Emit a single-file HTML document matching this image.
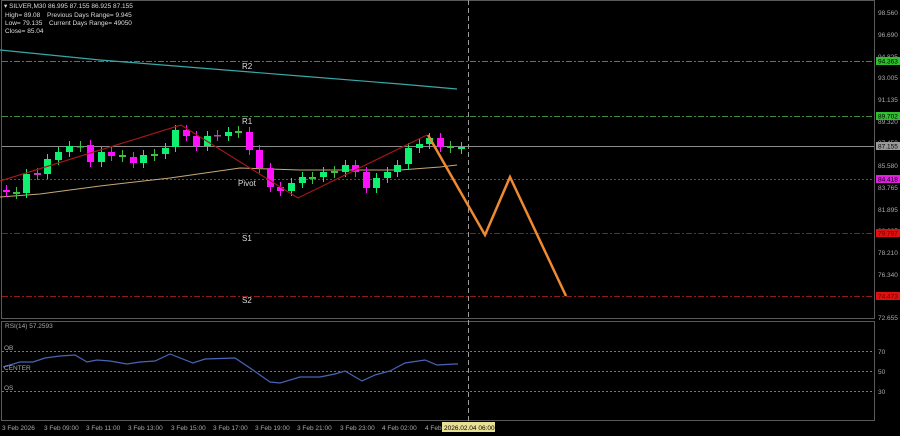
<!DOCTYPE html>
<html><head><meta charset="utf-8"><style>
html,body{margin:0;padding:0;background:#000;width:900px;height:436px;overflow:hidden}
svg{display:block;font-family:"Liberation Sans",sans-serif}
</style></head><body>
<svg id="s" width="900" height="436" viewBox="0 0 900 436" xmlns="http://www.w3.org/2000/svg">
<rect width="900" height="436" fill="#000"/>
<!-- frames -->
<rect x="1.5" y="0.5" width="873" height="318" fill="none" stroke="#5a5a5a"/>
<rect x="1.5" y="321.5" width="873" height="99" fill="none" stroke="#5a5a5a"/>
<!-- level lines -->
<g stroke-width="1" fill="none">
<line x1="2" y1="61.5" x2="874" y2="61.5" stroke="#3f8a3f" stroke-dasharray="6,2,2,2"/>
<line x1="2" y1="116.5" x2="874" y2="116.5" stroke="#3f8a3f" stroke-dasharray="6,2,2,2"/>
<line x1="2" y1="146.5" x2="874" y2="146.5" stroke="#8c8c8c"/>
<line x1="2" y1="179.5" x2="874" y2="179.5" stroke="#8a2a8a" stroke-dasharray="2,2"/>
<line x1="2" y1="233.5" x2="874" y2="233.5" stroke="#8a1c1c" stroke-dasharray="6,2,2,2"/>
<line x1="2" y1="296.5" x2="874" y2="296.5" stroke="#8a1c1c" stroke-dasharray="6,2,2,2"/>
<line x1="468.5" y1="0" x2="468.5" y2="421" stroke="#9a9a9a" stroke-dasharray="5,3"/>
</g>
<!-- MAs -->
<polyline points="0,50 100,60 200,68 300,76 400,84 457,89" fill="none" stroke="#3aa7a7" stroke-width="1.2"/>
<polyline points="0,197 40,194 100,186 170,178 240,168 300,170 400,170 440,167 457,165" fill="none" stroke="#c8a878" stroke-width="1"/>
<g id="c"></g>
<!-- zigzag -->
<polyline points="0,181 181,125 298,198 427,135" fill="none" stroke="#a01818" stroke-width="1.2"/>
<polyline points="428,135 485,235 510,177 566,296" fill="none" stroke="#f08a30" stroke-width="2.5"/>
<!-- labels -->
<g fill="#ddd" font-size="8">
<text x="242" y="69">R2</text><text x="242" y="124">R1</text><text x="238" y="186">Pivot</text>
<text x="242" y="241">S1</text><text x="242" y="303">S2</text>
</g>
<g fill="#ddd" font-size="6.5">
<text x="4" y="8">▾ SILVER,M30  86.995 87.155 86.925 87.155</text>
<text x="5" y="17">High= 89.08</text><text x="47" y="17">Previous Days Range= 9.945</text>
<text x="5" y="25">Low= 79.135</text><text x="49" y="25">Current Days Range= 49050</text>
<text x="5" y="33">Close= 85.04</text>
</g>
<!-- price axis -->
<g fill="#aaa" font-size="6.5">
<text x="878" y="15">98.560</text><text x="878" y="37">96.690</text><text x="878" y="59">94.825</text>
<text x="878" y="80">93.005</text><text x="878" y="102">91.135</text><text x="878" y="124">89.320</text>
<text x="878" y="145">87.450</text><text x="878" y="168">85.580</text><text x="878" y="190">83.765</text>
<text x="878" y="212">81.895</text><text x="878" y="233">80.025</text><text x="878" y="255">78.210</text>
<text x="878" y="277">76.340</text><text x="878" y="320">72.655</text>
</g>
<rect x="876" y="57" width="24" height="8" fill="#2fbf2f"/><text x="878" y="63.5" font-size="6.5" fill="#000">94.363</text>
<rect x="876" y="112" width="24" height="8" fill="#2fbf2f"/><text x="878" y="118.5" font-size="6.5" fill="#000">89.702</text>
<rect x="876" y="142" width="24" height="8" fill="#9a9a9a"/><text x="878" y="148.5" font-size="6.5" fill="#000">87.155</text>
<rect x="876" y="175" width="24" height="8" fill="#e020e0"/><text x="878" y="181.5" font-size="6.5" fill="#000">84.418</text>
<rect x="876" y="229" width="24" height="8" fill="#e01010"/><text x="878" y="235.5" font-size="6.5" fill="#600">79.797</text>
<rect x="876" y="292" width="24" height="8" fill="#e01010"/><text x="878" y="298.5" font-size="6.5" fill="#600">74.473</text>
<!-- RSI -->
<g stroke="#777" stroke-dasharray="2,2" stroke-width="1">
<line x1="2" y1="351.5" x2="874" y2="351.5"/><line x1="2" y1="371.5" x2="874" y2="371.5"/><line x1="2" y1="391.5" x2="874" y2="391.5"/>
</g>
<polyline points="3,367 20,362 33,362 45,358 60,356 75,355 87,362 97,360 110,361 127,364 140,362 155,361 170,354 193,363 205,359 235,358 250,368 270,382 280,383 300,377 320,377 335,374 345,371 362,381 375,375 390,371 405,363 425,360 437,365 455,364 458,364" fill="none" stroke="#4a64b8" stroke-width="1.2"/>
<g fill="#aaa" font-size="6.5">
<text x="5" y="328">RSI(14) 57.2593</text>
<text x="4" y="350">OB</text><text x="4" y="370">CENTER</text><text x="4" y="390">OS</text>
<text x="878" y="354">70</text><text x="878" y="374">50</text><text x="878" y="394">30</text>
</g>
<!-- time axis -->
<g fill="#aaa" font-size="6.5" id="t">
<text x="2" y="430">3 Feb 2026</text><text x="44" y="430">3 Feb 09:00</text><text x="86" y="430">3 Feb 11:00</text>
<text x="128" y="430">3 Feb 13:00</text><text x="171" y="430">3 Feb 15:00</text><text x="213" y="430">3 Feb 17:00</text>
<text x="255" y="430">3 Feb 19:00</text><text x="297" y="430">3 Feb 21:00</text><text x="340" y="430">3 Feb 23:00</text>
<text x="382" y="430">4 Feb 02:00</text><text x="425" y="430">4 Feb</text>
</g>
<rect x="442" y="422" width="53" height="10" fill="#e8e094"/>
<text x="444" y="430" font-size="6.5" fill="#000">2026.02.04 06:00</text>
</svg>
<script>
var d=[[3,190,192,0],[13,192,194,2],[23,174,193,1],[34,173,175,2],[44,159,174,1],[55,152,160,1],[66,146,152,1],[77,146,147,2],[87,145,162,0],[98,152,162,1],[108,152,156,0],[119,155,157,2],[130,157,163,0],[140,155,163,1],[151,154,156,2],[162,148,154,1],[172,130,147,1],[183,130,136,0],[193,136,146,0],[204,136,146,1],[214,135,136,2],[225,132,136,1],[235,131,133,2],[246,132,150,0],[256,150,168,0],[267,168,187,0],[277,187,191,0],[288,183,191,1],[299,177,183,1],[309,177,179,2],[320,172,177,1],[331,171,173,2],[342,165,172,1],[352,165,172,0],[363,172,188,0],[373,178,188,1],[384,172,178,1],[394,165,172,1],[405,148,164,1],[416,144,148,1],[426,138,144,1],[437,138,147,0],[447,146,148,2],[458,147,149,1]];
var h='';d.forEach(function(c){var col=c[3]==0?'#ff10ff':(c[3]==1?'#10f070':'#40a040');if(c[3]==2)col=(c[0]%2?'#40c040':'#c040c0');
h+='<line x1="'+(c[0]+3.5)+'" y1="'+(c[1]-5)+'" x2="'+(c[0]+3.5)+'" y2="'+(c[2]+5)+'" stroke="'+col+'" stroke-width="1"/>';
h+='<rect x="'+c[0]+'" y="'+c[1]+'" width="7" height="'+Math.max(1.5,c[2]-c[1])+'" fill="'+col+'"/>';});
document.getElementById('c').innerHTML=h;
</script>
</body></html>
